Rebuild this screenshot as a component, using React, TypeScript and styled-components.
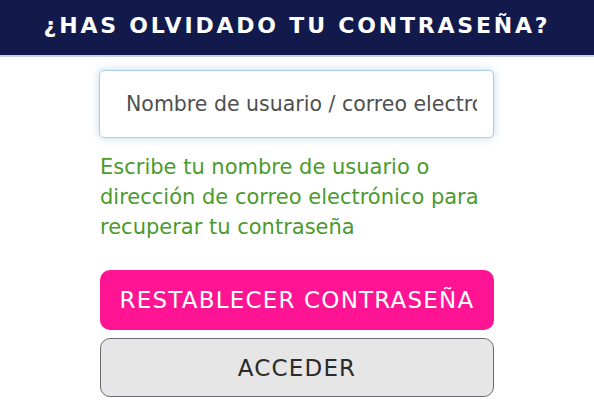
import React from "react";
import styled, { createGlobalStyle } from "styled-components";

const C = {
  navy: "#121a4b",
  rule: "#c9d3de",
  green: "#4b9a2c",
  pink: "#ff1493",
  grey: "#e6e6e6",
  greyBorder: "#6b6b73",
  ink: "#2b2b2b",
  inputBorder: "#a9cbe6",
};

const FONT = `"DejaVu Sans", "Noto Sans", sans-serif`;

const Global = createGlobalStyle`
  html, body { margin: 0; padding: 0; background: #fff; }
  body { font-family: ${FONT}; }
`;

const Page = styled.div`
  width: 594px;
  height: 402px;
  overflow: hidden;
  display: flex;
  flex-direction: column;
`;

const Header = styled.header`
  box-sizing: border-box;
  height: 57px;
  padding-bottom: 4px;
  background: ${C.navy};
  border-bottom: 2px solid ${C.rule};
  display: flex;
  align-items: center;
  justify-content: center;
`;

const Title = styled.h1`
  margin: 0;
  color: #fff;
  font-size: 22px;
  font-weight: 700;
  letter-spacing: 2.8px;
  white-space: nowrap;
`;

const Form = styled.form`
  width: 395px;
  margin: 13px 0 0 99px;
  display: flex;
  flex-direction: column;
`;

const Input = styled.input`
  box-sizing: border-box;
  height: 68px;
  width: 395px;
  padding: 0 16px 0 26px;
  border: 1px solid ${C.inputBorder};
  border-radius: 5px;
  box-shadow: 0 0 8px rgba(120, 170, 215, 0.45);
  font-family: ${FONT};
  font-size: 20.5px;
  outline: none;
  &::placeholder { color: #4f4f4f; }
`;

const Hint = styled.p`
  margin: 14px 0 0 1px;
  color: ${C.green};
  font-size: 21px;
  line-height: 30px;
  white-space: nowrap;
`;

const Button = styled.button<{ $primary?: boolean }>`
  box-sizing: border-box;
  height: ${(p) => (p.$primary ? 60 : 59)}px;
  width: 394px;
  margin-left: 1px;
  border-radius: 10px;
  font-family: ${FONT};
  font-size: 23px;
  letter-spacing: 1.2px;
  cursor: pointer;
  background: ${(p) => (p.$primary ? C.pink : C.grey)};
  color: ${(p) => (p.$primary ? "#fff" : C.ink)};
  border: ${(p) => (p.$primary ? "none" : `1px solid ${C.greyBorder}`)};
`;

const Buttons = styled.div`
  margin-top: 28px;
  display: flex;
  flex-direction: column;
  gap: 8px;
`;

export default function App() {
  return (
    <Page>
      <Global />
      <Header>
        <Title>¿HAS OLVIDADO TU CONTRASEÑA?</Title>
      </Header>
      <Form onSubmit={(e) => e.preventDefault()}>
        <Input type="text" placeholder="Nombre de usuario / correo electrónico" />
        <Hint>
          Escribe tu nombre de usuario o<br />
          dirección de correo electrónico para<br />
          recuperar tu contraseña
        </Hint>
        <Buttons>
          <Button $primary type="submit">RESTABLECER CONTRASEÑA</Button>
          <Button type="button">ACCEDER</Button>
        </Buttons>
      </Form>
    </Page>
  );
}
